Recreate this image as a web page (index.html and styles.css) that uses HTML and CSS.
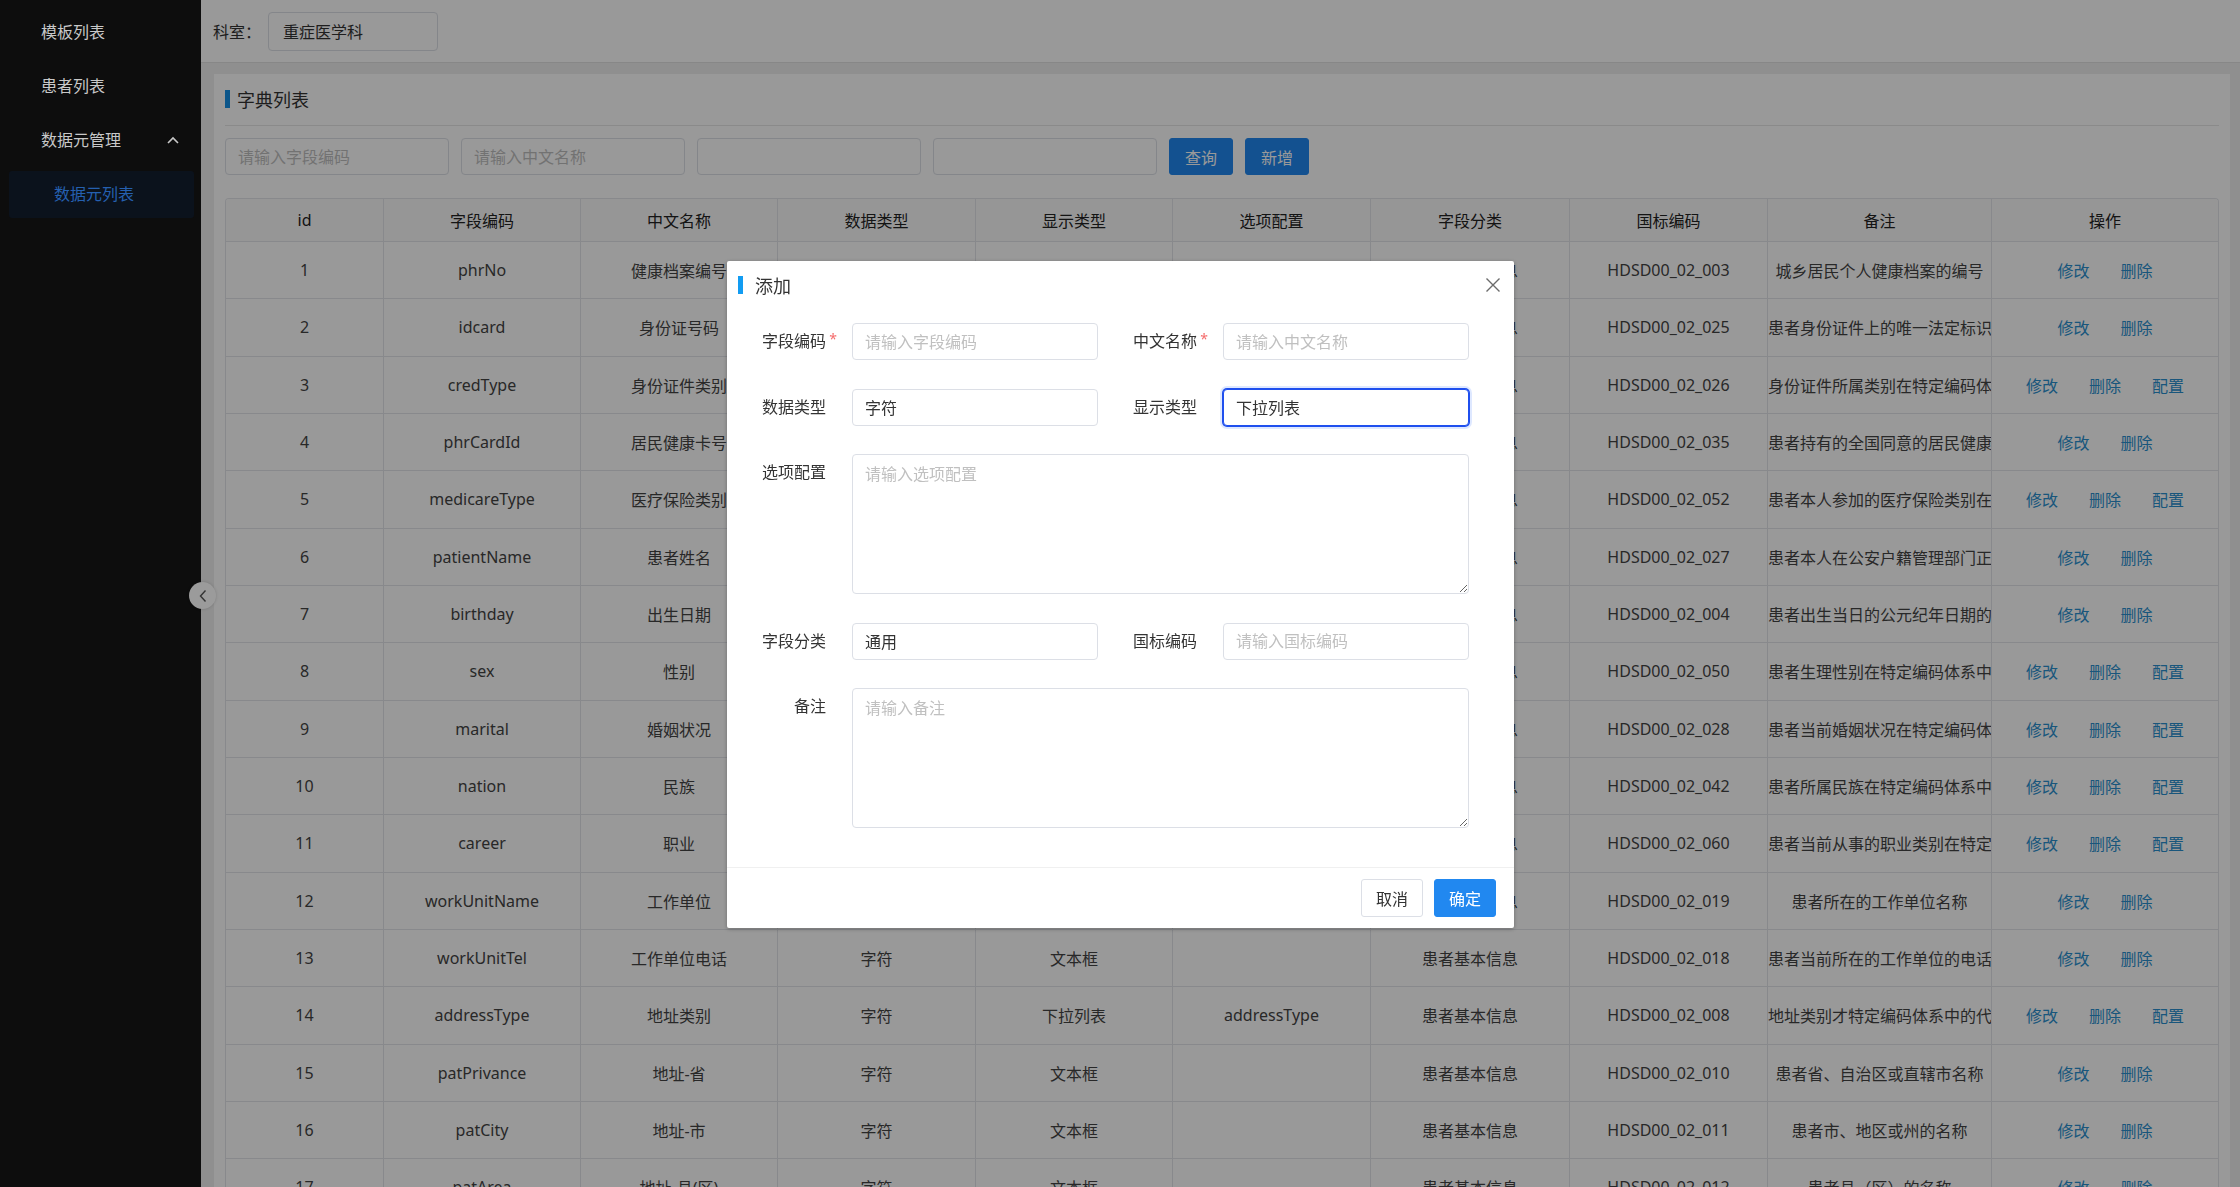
FILE: index.html
```html
<!DOCTYPE html>
<html lang="zh-CN">
<head>
<meta charset="utf-8">
<title>字典列表</title>
<link rel="stylesheet" href="styles.css">
</head>
<body>
<div class="app">
  <aside class="sidebar">
    <div class="menu-item">模板列表</div>
    <div class="menu-item">患者列表</div>
    <div class="menu-item submenu-title">数据元管理
      <svg class="chev" width="12" height="8" viewBox="0 0 12 8"><path d="M1 7 L6 2 L11 7" fill="none" stroke="#c8c8c8" stroke-width="1.6"/></svg>
    </div>
    <div class="menu-sub"><div class="menu-sub-item active">数据元列表</div></div>
  </aside>

  <div class="main">
    <header class="topbar">
      <span class="topbar-label">科室：</span>
      <div class="select">重症医学科</div>
    </header>

    <div class="content">
      <div class="card">
        <div class="card-title"><span class="bar"></span>字典列表</div>
        <div class="search">
          <input class="field" placeholder="请输入字段编码">
          <input class="field" placeholder="请输入中文名称">
          <input class="field">
          <input class="field">
          <button class="btn btn-primary">查询</button>
          <button class="btn btn-primary">新增</button>
        </div>

        <div class="table-wrap">
          <table class="grid">
            <colgroup>
              <col class="c-id"><col class="c-std"><col class="c-std"><col class="c-std2"><col class="c-std"><col class="c-std2"><col class="c-std3"><col class="c-std2"><col class="c-remark"><col>
            </colgroup>
            <thead>
              <tr><th>id</th><th>字段编码</th><th>中文名称</th><th>数据类型</th><th>显示类型</th><th>选项配置</th><th>字段分类</th><th>国标编码</th><th>备注</th><th>操作</th></tr>
            </thead>
            <tbody>
              <tr><td>1</td><td>phrNo</td><td>健康档案编号</td><td>字符</td><td>文本框</td><td></td><td>患者基本信息</td><td>HDSD00_02_003</td><td>城乡居民个人健康档案的编号</td><td><div class="ops"><a>修改</a><a>删除</a></div></td></tr>
              <tr><td>2</td><td>idcard</td><td>身份证号码</td><td>字符</td><td>文本框</td><td></td><td>患者基本信息</td><td>HDSD00_02_025</td><td>患者身份证件上的唯一法定标识符</td><td><div class="ops"><a>修改</a><a>删除</a></div></td></tr>
              <tr><td>3</td><td>credType</td><td>身份证件类别</td><td>字符</td><td>下拉列表</td><td>credType</td><td>患者基本信息</td><td>HDSD00_02_026</td><td>身份证件所属类别在特定编码体系中的代码</td><td><div class="ops"><a>修改</a><a>删除</a><a>配置</a></div></td></tr>
              <tr><td>4</td><td>phrCardId</td><td>居民健康卡号</td><td>字符</td><td>文本框</td><td></td><td>患者基本信息</td><td>HDSD00_02_035</td><td>患者持有的全国同意的居民健康卡号</td><td><div class="ops"><a>修改</a><a>删除</a></div></td></tr>
              <tr><td>5</td><td>medicareType</td><td>医疗保险类别</td><td>字符</td><td>下拉列表</td><td>medicareType</td><td>患者基本信息</td><td>HDSD00_02_052</td><td>患者本人参加的医疗保险类别在特定编码体系中的代码</td><td><div class="ops"><a>修改</a><a>删除</a><a>配置</a></div></td></tr>
              <tr><td>6</td><td>patientName</td><td>患者姓名</td><td>字符</td><td>文本框</td><td></td><td>患者基本信息</td><td>HDSD00_02_027</td><td>患者本人在公安户籍管理部门正式登记注册的姓氏和名称</td><td><div class="ops"><a>修改</a><a>删除</a></div></td></tr>
              <tr><td>7</td><td>birthday</td><td>出生日期</td><td>日期</td><td>日期框</td><td></td><td>患者基本信息</td><td>HDSD00_02_004</td><td>患者出生当日的公元纪年日期的完整描述</td><td><div class="ops"><a>修改</a><a>删除</a></div></td></tr>
              <tr><td>8</td><td>sex</td><td>性别</td><td>字符</td><td>下拉列表</td><td>sex</td><td>患者基本信息</td><td>HDSD00_02_050</td><td>患者生理性别在特定编码体系中的代码</td><td><div class="ops"><a>修改</a><a>删除</a><a>配置</a></div></td></tr>
              <tr><td>9</td><td>marital</td><td>婚姻状况</td><td>字符</td><td>下拉列表</td><td>marital</td><td>患者基本信息</td><td>HDSD00_02_028</td><td>患者当前婚姻状况在特定编码体系中的代码</td><td><div class="ops"><a>修改</a><a>删除</a><a>配置</a></div></td></tr>
              <tr><td>10</td><td>nation</td><td>民族</td><td>字符</td><td>下拉列表</td><td>nation</td><td>患者基本信息</td><td>HDSD00_02_042</td><td>患者所属民族在特定编码体系中的代码</td><td><div class="ops"><a>修改</a><a>删除</a><a>配置</a></div></td></tr>
              <tr><td>11</td><td>career</td><td>职业</td><td>字符</td><td>下拉列表</td><td>career</td><td>患者基本信息</td><td>HDSD00_02_060</td><td>患者当前从事的职业类别在特定编码体系中的代码</td><td><div class="ops"><a>修改</a><a>删除</a><a>配置</a></div></td></tr>
              <tr><td>12</td><td>workUnitName</td><td>工作单位</td><td>字符</td><td>文本框</td><td></td><td>患者基本信息</td><td>HDSD00_02_019</td><td>患者所在的工作单位名称</td><td><div class="ops"><a>修改</a><a>删除</a></div></td></tr>
              <tr><td>13</td><td>workUnitTel</td><td>工作单位电话</td><td>字符</td><td>文本框</td><td></td><td>患者基本信息</td><td>HDSD00_02_018</td><td>患者当前所在的工作单位的电话号码</td><td><div class="ops"><a>修改</a><a>删除</a></div></td></tr>
              <tr><td>14</td><td>addressType</td><td>地址类别</td><td>字符</td><td>下拉列表</td><td>addressType</td><td>患者基本信息</td><td>HDSD00_02_008</td><td>地址类别才特定编码体系中的代码</td><td><div class="ops"><a>修改</a><a>删除</a><a>配置</a></div></td></tr>
              <tr><td>15</td><td>patPrivance</td><td>地址-省</td><td>字符</td><td>文本框</td><td></td><td>患者基本信息</td><td>HDSD00_02_010</td><td>患者省、自治区或直辖市名称</td><td><div class="ops"><a>修改</a><a>删除</a></div></td></tr>
              <tr><td>16</td><td>patCity</td><td>地址-市</td><td>字符</td><td>文本框</td><td></td><td>患者基本信息</td><td>HDSD00_02_011</td><td>患者市、地区或州的名称</td><td><div class="ops"><a>修改</a><a>删除</a></div></td></tr>
              <tr><td>17</td><td>patArea</td><td>地址-县(区)</td><td>字符</td><td>文本框</td><td></td><td>患者基本信息</td><td>HDSD00_02_012</td><td>患者县（区）的名称</td><td><div class="ops"><a>修改</a><a>删除</a></div></td></tr>
            </tbody>
          </table>
        </div>
      </div>
    </div>

    <button class="collapse-btn" aria-label="收起">
      <svg width="10" height="14" viewBox="0 0 10 14"><path d="M7.5 1.5 L2.5 7 L7.5 12.5" fill="none" stroke="#333" stroke-width="1.4"/></svg>
    </button>
  </div>
</div>

<div class="mask"></div>

<div class="dialog">
  <div class="dlg-head">
    <span class="bar dlg-bar"></span>
    <span class="dlg-title">添加</span>
    <svg class="dlg-close" width="16" height="16" viewBox="0 0 16 16"><path d="M1.5 1.5 L14.5 14.5 M14.5 1.5 L1.5 14.5" stroke="#6b6b6b" stroke-width="1.4"/></svg>
  </div>
  <div class="dlg-body">
    <label class="f-label req">字段编码<span class="star">*</span></label>
    <input class="f-input" placeholder="请输入字段编码">
    <label class="f-label req">中文名称<span class="star">*</span></label>
    <input class="f-input" placeholder="请输入中文名称">

    <label class="f-label">数据类型</label>
    <input class="f-input" value="字符">
    <label class="f-label">显示类型</label>
    <input class="f-input is-focus" value="下拉列表">

    <label class="f-label">选项配置</label>
    <textarea class="f-area" placeholder="请输入选项配置"></textarea>

    <label class="f-label">字段分类</label>
    <input class="f-input" value="通用">
    <label class="f-label">国标编码</label>
    <input class="f-input" placeholder="请输入国标编码">

    <label class="f-label">备注</label>
    <textarea class="f-area" placeholder="请输入备注"></textarea>
  </div>
  <div class="dlg-foot">
    <button class="btn btn-default">取消</button>
    <button class="btn btn-primary">确定</button>
  </div>
</div>
</body>
</html>
```

FILE: styles.css
```css
html, body {
  margin: 0;
  height: 100%;
  overflow: hidden;
  font-family: "Noto Sans", "Noto Sans CJK SC", sans-serif;
  font-size: 16px;
  color: #333;
}

.app {
  display: flex;
  height: 100vh;
}

/* sidebar */
.sidebar {
  width: 201px;
  flex: none;
  background: #0d0d0d;
  position: relative;
  z-index: 20;
  padding-top: 5px;
  box-sizing: border-box;
}
.menu-item {
  height: 54px;
  line-height: 54px;
  padding-left: 41px;
  color: #c8c8c8;
  position: relative;
}
.chev {
  position: absolute;
  left: 167px;
  top: 23px;
}
.menu-sub {
  padding: 4px 7px 0 9px;
}
.menu-sub-item {
  height: 47px;
  line-height: 47px;
  padding-left: 45px;
  border-radius: 3px;
  background: #0b121c;
  color: #2560b0;
}

/* main */
.main {
  flex: 1;
  min-width: 0;
  position: relative;
  background: #eeeeee;
  display: flex;
  flex-direction: column;
}
.topbar {
  height: 63px;
  flex: none;
  box-sizing: border-box;
  border-bottom: 1px solid #e2e2e2;
  background: #fff;
  display: flex;
  align-items: center;
  padding-left: 12px;
  gap: 7px;
}
.topbar-label { color: #333; }
.select {
  width: 170px;
  height: 39px;
  box-sizing: border-box;
  border: 1px solid #dcdfe6;
  border-radius: 4px;
  padding-left: 14px;
  display: flex;
  align-items: center;
  color: #333;
}

.content {
  padding: 11px 10px 0 13px;
}
.card {
  background: #fff;
  padding: 0 11px;
}
.card-title {
  display: flex;
  align-items: center;
  height: 18px;
  padding: 16px 0 17px;
  border-bottom: 1px solid #e6e6e6;
  font-size: 18px;
  color: #333;
}
.bar {
  width: 5px;
  height: 18px;
  background: #1590e6;
  margin-right: 7px;
  flex: none;
}

.search {
  display: flex;
  gap: 12px;
  margin-top: 12px;
}
.field {
  width: 224px;
  height: 37px;
  box-sizing: border-box;
  border: 1px solid #dcdfe6;
  border-radius: 4px;
  padding: 0 12px;
  font: inherit;
  color: #333;
  background: #fff;
}
.field::placeholder { color: #bfbfbf; }

.btn {
  height: 37px;
  padding: 0 15px;
  border-radius: 3px;
  font: inherit;
  border: 1px solid transparent;
  cursor: pointer;
}
.btn-primary {
  background: #2188f0;
  border-color: #2188f0;
  color: #fff;
}
.btn-default {
  background: #fff;
  border-color: #dcdfe6;
  color: #333;
}

/* table */
.table-wrap {
  margin-top: 23px;
  border: 1px solid #e3e5ea;
  border-bottom: none;
  border-radius: 4px 4px 0 0;
  overflow: hidden;
}
.grid {
  width: 100%;
  table-layout: fixed;
  border-collapse: separate;
  border-spacing: 0;
}
.c-id { width: 158px; }
.c-std { width: 197px; }
.c-std2 { width: 198px; }
.c-std3 { width: 199px; }
.c-remark { width: 224px; }

.grid th, .grid td {
  padding: 0;
  text-align: center;
  white-space: nowrap;
  overflow: hidden;
  border-right: 1px solid #e3e5ea;
  border-bottom: 1px solid #e3e5ea;
  box-sizing: border-box;
}
.grid th:last-child, .grid td:last-child { border-right: none; }
.grid th {
  height: 43px;
  font-weight: normal;
  color: #222;
  background: #fafafa;
}
.grid td {
  height: 57.33px;
  color: #444;
}
.ops {
  display: flex;
  justify-content: center;
  gap: 31px;
}
.ops a {
  color: #2a90cf;
  cursor: pointer;
}

.collapse-btn {
  position: absolute;
  left: -12px;
  top: 582px;
  width: 27px;
  height: 27px;
  border-radius: 50%;
  border: none;
  padding: 0;
  background: #9b9b9b;
  box-shadow: 0 0 3px rgba(0, 0, 0, 0.18);
  z-index: 25;
  display: flex;
  align-items: center;
  justify-content: center;
}

/* mask + dialog */
.mask {
  position: fixed;
  inset: 0;
  background: rgba(0, 0, 0, 0.4);
  z-index: 10;
}
.dialog {
  position: fixed;
  top: 261px;
  left: calc(50% - 393px);
  width: 787px;
  background: #fff;
  border-radius: 2px;
  box-shadow: 0 1px 4px rgba(0, 0, 0, 0.3);
  z-index: 30;
}
.dlg-head {
  display: flex;
  align-items: center;
  padding: 15px 13px 15px 11px;
  height: 18px;
}
.dlg-bar { margin-right: 12px; background: #129cf2; }
.dlg-title {
  font-size: 18px;
  color: #333;
  flex: 1;
}
.dlg-close { display: block; }

.dlg-body {
  display: grid;
  grid-template-columns: 115px 1fr 125px 1fr;
  row-gap: 28.5px;
  padding: 14px 45px 39px 10px;
}
.f-label {
  position: relative;
  text-align: right;
  padding-right: 26px;
  line-height: 37px;
  color: #333;
  align-self: start;
}
.star {
  position: absolute;
  right: 15px;
  top: -3px;
  color: #f56c6c;
  font-size: 14px;
}
.f-input {
  height: 37px;
  box-sizing: border-box;
  border: 1px solid #dcdfe6;
  border-radius: 4px;
  padding: 0 12px;
  font: inherit;
  color: #333;
  min-width: 0;
  outline: none;
}
.f-input::placeholder, .f-area::placeholder { color: #c0c0c0; }
.f-input.is-focus {
  border-color: #1f4fee;
  box-shadow: 0 0 0 1px #1f4fee, 0 0 0 3px rgba(70, 130, 255, 0.18);
}
.f-area {
  grid-column: 2 / 5;
  height: 140px;
  box-sizing: border-box;
  border: 1px solid #dcdfe6;
  border-radius: 4px;
  padding: 7px 12px;
  font: inherit;
  line-height: 24px;
  color: #333;
  resize: vertical;
  outline: none;
}

.dlg-foot {
  border-top: 1px solid #f0f0f0;
  padding: 11px 18px 11px;
  display: flex;
  justify-content: flex-end;
  gap: 11px;
}
.dlg-foot .btn {
  height: 38px;
  padding: 0 14px;
  border-radius: 3px;
}
```
